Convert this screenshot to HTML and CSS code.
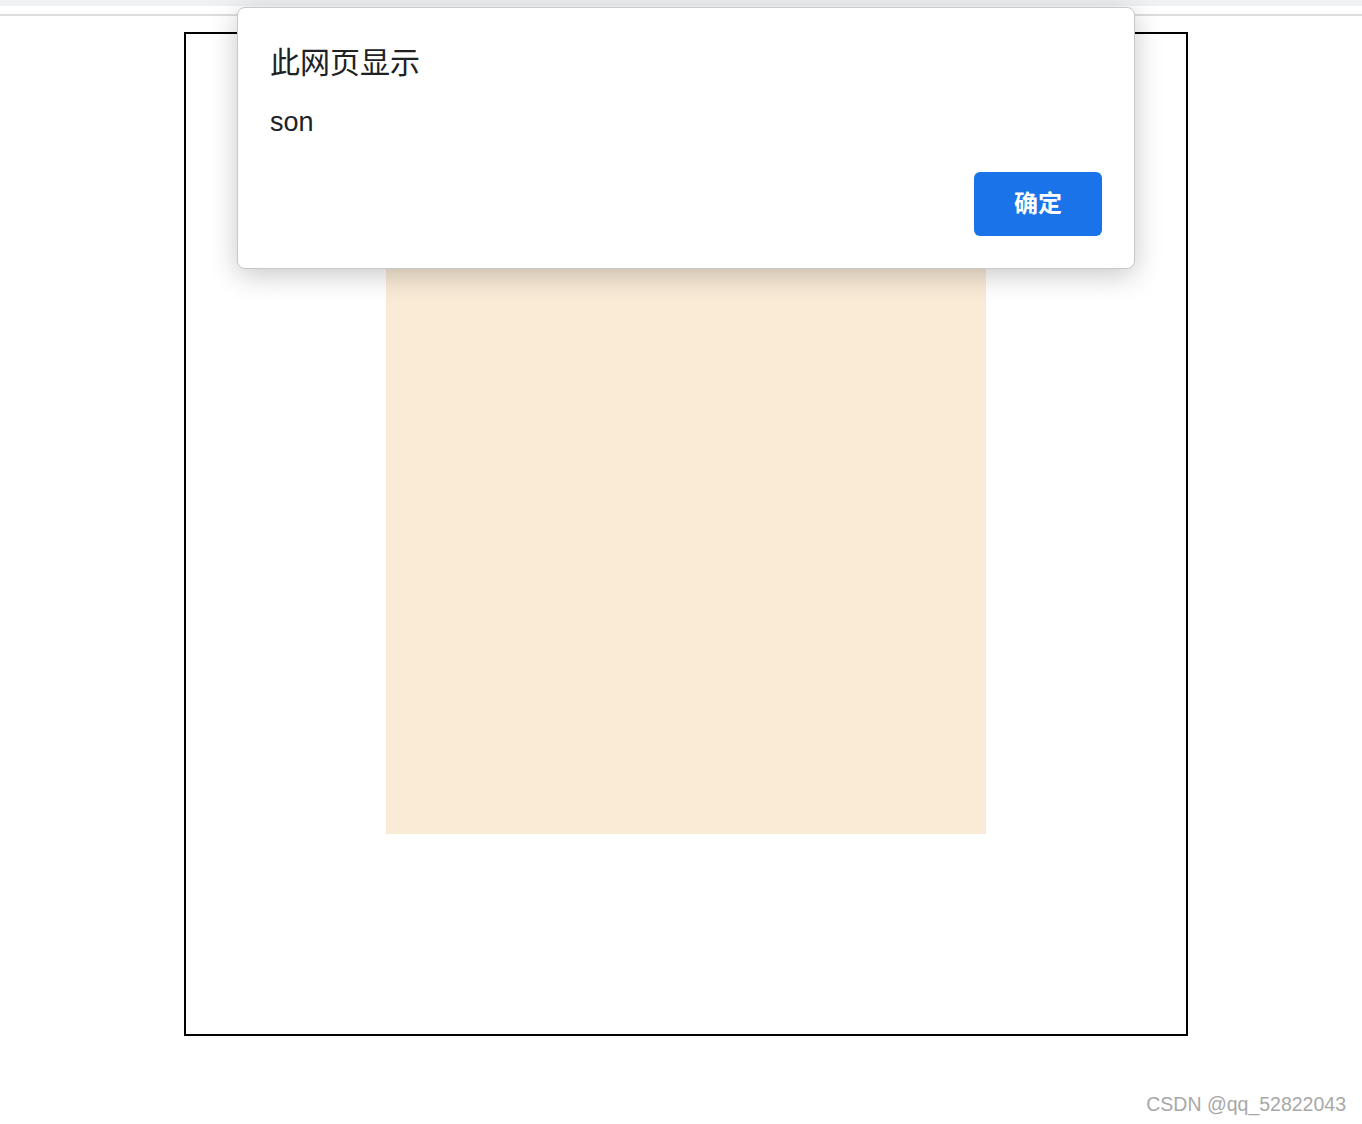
FILE: index.html
```html
<!DOCTYPE html>
<html lang="zh-CN">
<head>
    <meta charset="UTF-8">
    <meta name="viewport" content="width=device-width, initial-scale=1.0">
    <title>alert</title>
    <link rel="stylesheet" href="styles.css">
</head>
<body>
    <div class="topbar"></div>

    <div class="father">
        <div class="son">son</div>
    </div>

    <!-- alert("son") -->
    <div class="dialog">
        <div class="dialog-title">此网页显示</div>
        <div class="dialog-msg">son</div>
        <div class="dialog-actions">
            <button type="button" class="ok-btn">确定</button>
        </div>
    </div>

    <div class="watermark">CSDN @qq_52822043</div>
</body>
</html>
```

FILE: styles.css
```css
body {
    margin: 0;
    font-family: "Liberation Sans", "Noto Sans CJK SC", sans-serif;
    background: #fff;
}
.topbar {
    height: 14px;
    border-bottom: 2px solid #dddddd;
    background: linear-gradient(#eff1f3 0, #eff1f3 6px, #fff 6px);
}
.father {
    width: 1000px;
    height: 800px;
    border: 2px solid #000;
    margin: 16px 0 0 184px;
    padding-top: 200px;
}
.son {
    width: 600px;
    height: 600px;
    margin: 0 auto;
    background-color: antiquewhite;
    font-size: 16px;
    color: #333;
}
.dialog {
    position: absolute;
    left: 237px;
    top: 7px;
    width: 832px;
    padding: 32px;
    background: #fff;
    border: 1px solid #c8c8c8;
    border-radius: 8px;
    box-shadow: 0 6px 28px rgba(0, 0, 0, 0.22);
}
.dialog-title {
    font-size: 30px;
    line-height: 40px;
    color: #202124;
    font-family: "Noto Sans CJK SC", sans-serif;
}
.dialog-msg {
    margin-top: 26px;
    font-size: 27px;
    line-height: 32px;
    color: #202124;
}
.dialog-actions {
    display: flex;
    justify-content: flex-end;
    margin-top: 34px;
}
.ok-btn {
    width: 128px;
    height: 64px;
    padding: 0 0 5px;
    background-color: #1a73e8;
    color: #fff;
    border: none;
    border-radius: 6px;
    font-size: 24px;
    font-weight: bold;
    font-family: "Noto Sans CJK SC", sans-serif;
    cursor: pointer;
}
.watermark {
    position: absolute;
    right: 16px;
    top: 1093px;
    font-size: 19.5px;
    color: #a8a8a8;
    font-family: "Liberation Sans", sans-serif;
}
```
